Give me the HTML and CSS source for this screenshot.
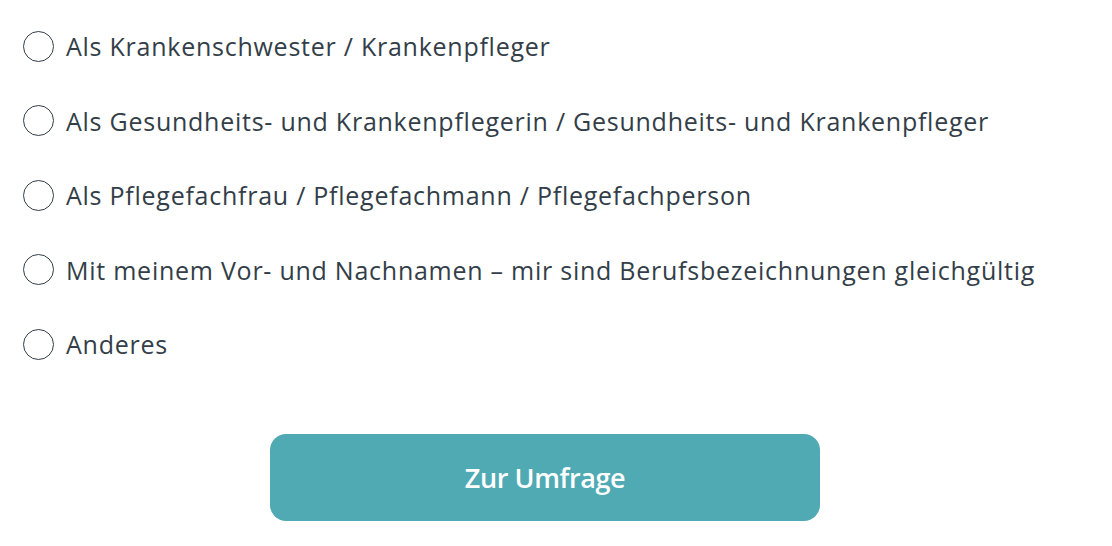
FILE: index.html
```html
<!DOCTYPE html>
<html lang="de">
	<head>
		<meta charset="utf-8">
		<title>Berufsbezeichnung</title>
		<link rel="stylesheet" href="styles.css">
	</head>
	<body>
		<form class="survey" onsubmit="return false;">
			<div class="choices">
				<label class="choice"><input type="radio" name="title"><span class="radio"></span>Als Krankenschwester / Krankenpfleger</label>
				<label class="choice"><input type="radio" name="title"><span class="radio"></span>Als Gesundheits- und Krankenpflegerin / Gesundheits- und Krankenpfleger</label>
				<label class="choice"><input type="radio" name="title"><span class="radio"></span>Als Pflegefachfrau / Pflegefachmann / Pflegefachperson</label>
				<label class="choice"><input type="radio" name="title"><span class="radio"></span>Mit meinem Vor- und Nachnamen – mir sind Berufsbezeichnungen gleichgültig</label>
				<label class="choice"><input type="radio" name="title"><span class="radio"></span>Anderes</label>
			</div>
			<div class="actions">
				<button class="butt" type="submit">Zur Umfrage</button>
			</div>
		</form>
	</body>
</html>
```

FILE: styles.css
```css
body {
	margin: 0;
	background-color: #FFFFFF;
	font-family: "Open Sans", "Liberation Sans", sans-serif;
	color: #333E48;
}

.survey {
	padding: 9px 0 0 23px;
}

.choices {
	display: flex;
	flex-direction: column;
}

.choice {
	display: flex;
	align-items: center;
	height: 74.5px;
	font-size: 25px;
	letter-spacing: 0.75px;
	cursor: pointer;
}

.choice input {
	display: none;
}

.radio {
	box-sizing: border-box;
	width: 31px;
	height: 31px;
	margin-right: 12px;
	border: 1.5px solid #333E48;
	border-radius: 50%;
	flex-shrink: 0;
}

.choice input:checked + .radio {
	background: radial-gradient(circle, #333E48 40%, transparent 42%);
}

.actions {
	display: flex;
	padding: 52px 0 0 247px;
}

.butt {
	width: 550px;
	height: 87px;
	border: none;
	border-radius: 16px;
	background-color: #50AAB4;
	color: #FFFFFF;
	font-family: "Open Sans", "Liberation Sans", sans-serif;
	font-size: 27px;
	font-weight: 600;
	letter-spacing: -0.4px;
	cursor: pointer;
}
```
